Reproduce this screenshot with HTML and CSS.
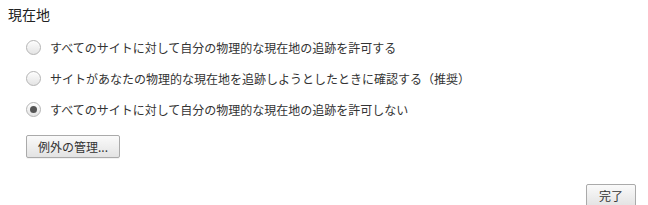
FILE: index.html
```html
<!DOCTYPE html>
<html>
<head>
    <meta charset="UTF-8">
    <title>現在地</title>
    <link rel="stylesheet" href="styles.css">
</head>
<body>
    <div class="settings">
        <h3 class="title">現在地</h3>
        <div class="options">
            <label class="option">
                <input type="radio" name="geo" value="allow">
                <span>すべてのサイトに対して自分の物理的な現在地の追跡を許可する</span>
            </label>
            <label class="option">
                <input type="radio" name="geo" value="ask">
                <span>サイトがあなたの物理的な現在地を追跡しようとしたときに確認する（推奨）</span>
            </label>
            <label class="option">
                <input type="radio" name="geo" value="block" checked>
                <span>すべてのサイトに対して自分の物理的な現在地の追跡を許可しない</span>
            </label>
            <button class="btn">例外の管理...</button>
        </div>
        <div class="footer">
            <button class="btn done">完了</button>
        </div>
    </div>
</body>
</html>
```

FILE: styles.css
```css
body {
    margin: 0;
    background-color: white;
    font-family: "Noto Sans CJK JP", "Noto Sans", sans-serif;
    font-size: 12px;
    color: #333;
}

.settings {
    padding: 6px 12px 0 8px;
}

.title {
    margin: 0;
    font-size: 14px;
    font-weight: normal;
    line-height: 16px;
    color: #222;
}

.options {
    display: flex;
    flex-direction: column;
    align-items: flex-start;
    padding: 10px 0 0 18px;
}

.option {
    display: flex;
    align-items: center;
    gap: 9px;
    height: 31px;
}

.option input {
    appearance: none;
    -webkit-appearance: none;
    margin: 0;
    width: 15px;
    height: 15px;
    border: 1px solid #b4b4b4;
    border-radius: 50%;
    background: linear-gradient(#fdfdfd, #e4e4e4);
    box-shadow: inset 0 1px 1px rgba(255,255,255,0.8);
    display: flex;
    align-items: center;
    justify-content: center;
}

.option input:checked::after {
    content: "";
    width: 7px;
    height: 7px;
    border-radius: 50%;
    background-color: #555;
}

.btn {
    font-family: inherit;
    font-size: 12px;
    color: #333;
    height: 23px;
    padding: 0 11px;
    border: 1px solid #aaa;
    border-radius: 2px;
    background: linear-gradient(#fafafa, #e3e3e3);
    box-shadow: 0 1px 0 rgba(0,0,0,0.05);
    cursor: pointer;
}

.options .btn {
    margin-top: 10px;
}

.done {
    padding: 0 12px;
}

.footer {
    display: flex;
    justify-content: flex-end;
    margin-top: 26px;
}
```
